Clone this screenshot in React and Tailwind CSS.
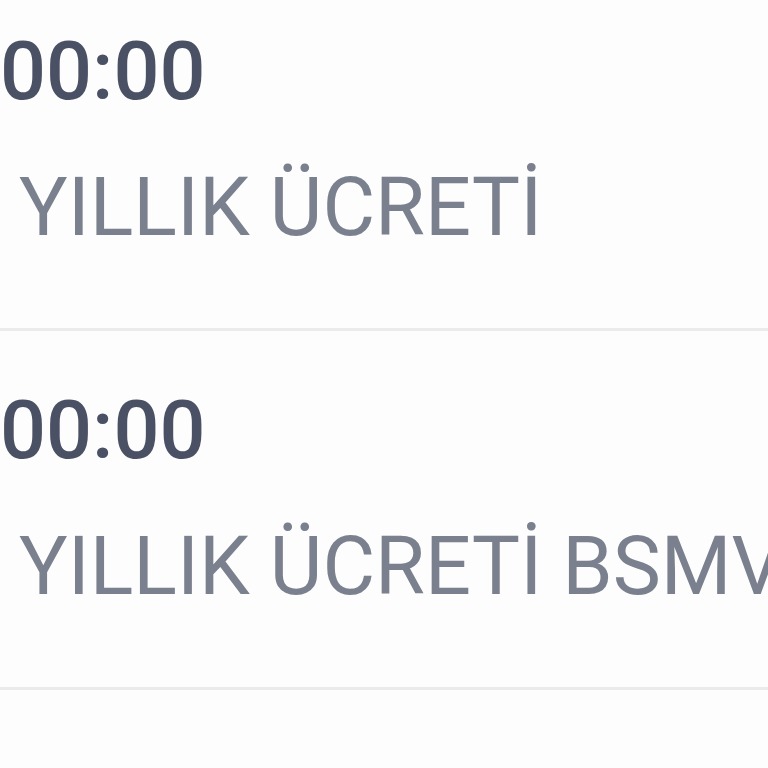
export default function App() {
  const rows = [
    { time: "00:00", label: "YILLIK ÜCRETİ" },
    { time: "00:00", label: "YILLIK ÜCRETİ BSMV" },
  ];
  return (
    <div className="h-[768px] w-[768px] overflow-hidden bg-[#fdfdfd]" style={{ fontFamily: "Roboto, 'Noto Sans', sans-serif" }}>
      <div className="-mt-[28px]">
        {rows.map((r, i) => (
          <div key={i} className="border-b-[3px] border-[#ebebeb] pt-[57px] pb-[77px]">
            <div className="whitespace-nowrap text-[81px] font-medium leading-[86px] text-[#4b5165]">{r.time}</div>
            <div className="mt-[50px] whitespace-nowrap pl-[19px] text-[81px] leading-[86px] text-[#7b808e]">{r.label}</div>
          </div>
        ))}
      </div>
    </div>
  );
}
